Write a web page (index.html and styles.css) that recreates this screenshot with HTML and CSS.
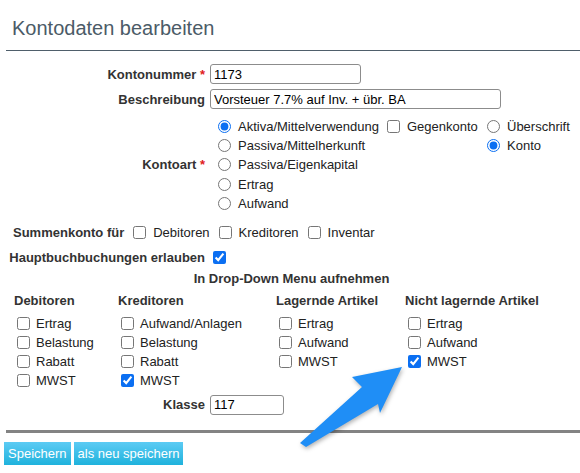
FILE: index.html
```html
<!DOCTYPE html>
<html lang="de">
<head>
  <meta charset="UTF-8" />
  <meta name="viewport" content="width=device-width, initial-scale=1.0"/>
  <title>Kontodaten bearbeiten</title>
  <link rel="stylesheet" href="styles.css">
</head>
<body>
  <div class="page">
    <h1 class="title">Kontodaten bearbeiten</h1>

    <form class="account-form">
      <div class="row row-first">
        <label class="label" for="accno">Kontonummer <span class="req">*</span></label>
        <div><input class="text-input accno" id="accno" type="text" value="1173"></div>
      </div>
      <div class="row row-next">
        <label class="label" for="desc">Beschreibung</label>
        <div><input class="text-input desc" id="desc" type="text" value="Vorsteuer 7.7% auf Inv. + übr. BA"></div>
      </div>

      <div class="row row-kontoart">
        <span class="label">Kontoart <span class="req">*</span></span>
        <div class="kontoart">
          <div class="opt-col col-art">
            <label class="opt"><input type="radio" name="category" checked>Aktiva/Mittelverwendung</label>
            <label class="opt"><input type="radio" name="category">Passiva/Mittelherkunft</label>
            <label class="opt"><input type="radio" name="category">Passiva/Eigenkapital</label>
            <label class="opt"><input type="radio" name="category">Ertrag</label>
            <label class="opt"><input type="radio" name="category">Aufwand</label>
          </div>
          <div class="opt-col col-contra">
            <label class="opt"><input type="checkbox">Gegenkonto</label>
          </div>
          <div class="opt-col col-type">
            <label class="opt"><input type="radio" name="charttype">Überschrift</label>
            <label class="opt"><input type="radio" name="charttype" checked>Konto</label>
          </div>
        </div>
      </div>

      <div class="summary">
        <span class="label-left">Summenkonto für</span>
        <label class="inline-opt"><input type="checkbox">Debitoren</label>
        <label class="inline-opt"><input type="checkbox">Kreditoren</label>
        <label class="inline-opt"><input type="checkbox">Inventar</label>
      </div>

      <div class="row row-ledger">
        <span class="label">Hauptbuchbuchungen erlauben</span>
        <div><input class="single-check" type="checkbox" checked></div>
      </div>

      <div class="dropdown-title">In Drop-Down Menu aufnehmen</div>
      <div class="dropdown-grid">
        <div class="dd-col">
          <div class="dd-head">Debitoren</div>
          <label class="dd-opt"><input type="checkbox">Ertrag</label>
          <label class="dd-opt"><input type="checkbox">Belastung</label>
          <label class="dd-opt"><input type="checkbox">Rabatt</label>
          <label class="dd-opt"><input type="checkbox">MWST</label>
        </div>
        <div class="dd-col">
          <div class="dd-head">Kreditoren</div>
          <label class="dd-opt"><input type="checkbox">Aufwand/Anlagen</label>
          <label class="dd-opt"><input type="checkbox">Belastung</label>
          <label class="dd-opt"><input type="checkbox">Rabatt</label>
          <label class="dd-opt"><input type="checkbox" checked>MWST</label>
        </div>
        <div class="dd-col">
          <div class="dd-head">Lagernde Artikel</div>
          <label class="dd-opt"><input type="checkbox">Ertrag</label>
          <label class="dd-opt"><input type="checkbox">Aufwand</label>
          <label class="dd-opt"><input type="checkbox">MWST</label>
        </div>
        <div class="dd-col">
          <div class="dd-head">Nicht lagernde Artikel</div>
          <label class="dd-opt"><input type="checkbox">Ertrag</label>
          <label class="dd-opt"><input type="checkbox">Aufwand</label>
          <label class="dd-opt"><input type="checkbox" checked>MWST</label>
        </div>
      </div>

      <div class="row row-klasse">
        <label class="label" for="klasse">Klasse</label>
        <div><input class="text-input klasse" id="klasse" type="text" value="117"></div>
      </div>

      <hr class="divider">

      <div class="actions">
        <button type="button" class="btn">Speichern</button>
        <button type="button" class="btn">als neu speichern</button>
      </div>
    </form>

    <!-- callout arrow -->
    <svg class="arrow" width="580" height="473" viewBox="0 0 580 473">
      <polygon points="300,443 362,387 352,377 402,367 380,413 378,404 306,447" fill="#1f8ef6"/>
    </svg>
  </div>
</body>
</html>
```

FILE: styles.css
```css
* {
  box-sizing: border-box;
}
body {
  margin: 0;
  background-color: #fff;
  color: #222;
  font-family: "Liberation Sans", Arial, sans-serif;
  font-size: 13px;
}
.page {
  position: relative;
  width: 580px;
  height: 473px;
  overflow: hidden;
}
.title {
  margin: 0 0 0 6px;
  padding: 17px 0 10px 6px;
  font-size: 20px;
  line-height: 23px;
  font-weight: normal;
  color: #4b5b67;
  border-bottom: 1px solid #4f5f6b;
}

/* form rows: label column + value column */
.row {
  display: grid;
  grid-template-columns: 205px 1fr;
  column-gap: 5px;
  align-items: center;
}
.row-first {
  margin-top: 13px;
}
.row-next {
  margin-top: 5px;
}
.row-kontoart {
  margin-top: 8px;
}
.row-ledger {
  margin-top: 5px;
  height: 20px;
}
.row-klasse {
  margin-top: 5px;
}
.label {
  text-align: right;
  font-weight: bold;
  color: #333;
}
.req {
  color: #e0201b;
}
.text-input {
  display: block;
  height: 20px;
  padding: 0 3px;
  border: 1px solid #8c8c8c;
  border-radius: 3px;
  font-family: inherit;
  font-size: 13px;
  color: #000;
}
.accno {
  width: 151px;
}
.desc {
  width: 291px;
}
.klasse {
  width: 74px;
}

input[type="checkbox"],
input[type="radio"] {
  width: 13px;
  height: 13px;
  margin: 0;
  accent-color: #0b6ff2;
  flex: none;
}

/* Kontoart block */
.kontoart {
  display: flex;
}
.opt-col {
  display: flex;
  flex-direction: column;
}
.col-art {
  width: 173px;
}
.col-contra {
  width: 100px;
}
.opt {
  display: flex;
  align-items: center;
  height: 19.2px;
  white-space: nowrap;
}
.col-art .opt input {
  margin: 0 7px 0 8px;
}
.col-contra .opt input,
.col-type .opt input {
  margin: 0 7px 0 4px;
}

/* Summenkonto */
.summary {
  display: flex;
  align-items: center;
  height: 20px;
  margin-top: 10px;
  padding-left: 13px;
}
.label-left {
  font-weight: bold;
  color: #333;
}
.inline-opt {
  display: flex;
  align-items: center;
}
.inline-opt input {
  margin: 0 7px 0 9px;
}
.single-check {
  display: block;
  margin-left: 3px !important;
}

/* drop-down section */
.dropdown-title {
  height: 20px;
  line-height: 20px;
  margin-top: 1px;
  padding-left: 3px;
  text-align: center;
  font-weight: bold;
  color: #333;
}
.dropdown-grid {
  display: grid;
  grid-template-columns: 104px 158px 129px 1fr;
  margin-top: 2px;
  padding-left: 14px;
}
.dd-col {
  display: flex;
  flex-direction: column;
}
.dd-head {
  height: 20px;
  line-height: 20px;
  margin-bottom: 3px;
  font-weight: bold;
  color: #333;
  white-space: nowrap;
}
.dd-opt {
  display: flex;
  align-items: center;
  height: 19px;
  white-space: nowrap;
}
.dd-opt input {
  margin: 0 6px 0 3px;
}

.divider {
  height: 3px;
  margin: 15px 0 0 6px;
  border: none;
  background-color: #838383;
}
.actions {
  display: flex;
  gap: 3px;
  margin-top: 9px;
  padding-left: 4px;
}
.btn {
  height: 23px;
  padding: 0 4px;
  border: none;
  background: linear-gradient(#5ccbf4, #1fb2dc);
  color: #fff;
  font-family: inherit;
  font-size: 13px;
  cursor: pointer;
}

.arrow {
  position: absolute;
  left: 0;
  top: 0;
  pointer-events: none;
  filter: drop-shadow(1px 2px 2px rgba(0, 0, 0, 0.3));
}
```
